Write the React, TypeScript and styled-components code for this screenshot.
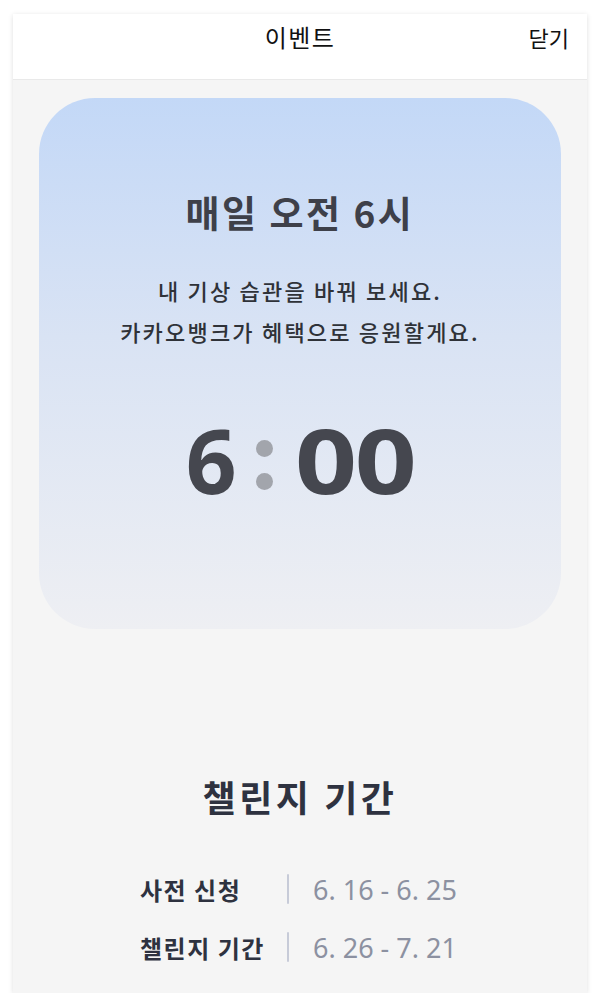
import styled, { createGlobalStyle } from "styled-components";

const GlobalStyle = createGlobalStyle`
  html, body {
    margin: 0;
    padding: 0;
    background: #ffffff;
  }
  body {
    font-family: "Noto Sans CJK KR", "Noto Sans", sans-serif;
  }
`

const Frame = styled.div`
  width: 574px;
  height: 979px;
  margin: 14px 13px 0;
  background: #f5f5f5;
  box-shadow: 0 1px 5px rgba(0, 0, 0, 0.13);
  display: flex;
  flex-direction: column;
  overflow: hidden;
`

const Header = styled.header`
  position: relative;
  height: 66px;
  background: #ffffff;
  border-bottom: 1px solid #e9e9e9;
  display: flex;
  justify-content: center;
  align-items: flex-start;
  padding-top: 6px;
  box-sizing: border-box;
`

const Title = styled.h1`
  margin: 0;
  font-size: 24px;
  font-weight: 400;
  letter-spacing: 1.5px;
  line-height: 34px;
  color: #111111;
`

const CloseButton = styled.button`
  position: absolute;
  right: 18px;
  top: 6px;
  border: 0;
  background: none;
  padding: 0;
  font-family: inherit;
  font-size: 22px;
  line-height: 34px;
  color: #111111;
`

const Card = styled.section`
  margin: 18px 26px 0;
  height: 531px;
  border-radius: 56px;
  background: linear-gradient(180deg, #c3d8f7 0%, #d9e3f4 45%, #eeeff3 100%);
  display: flex;
  flex-direction: column;
  align-items: center;
  padding-top: 92px;
  box-sizing: border-box;
`

const CardTitle = styled.h2`
  margin: 0;
  font-size: 37px;
  font-weight: 700;
  letter-spacing: 2.5px;
  line-height: 44px;
  color: #3e4049;
`

const Desc = styled.p`
  margin: 36px 0 0;
  font-size: 22px;
  font-weight: 500;
  letter-spacing: 2.2px;
  line-height: 41px;
  text-align: center;
  color: #2f3238;
`

const Clock = styled.div`
  margin-top: 58px;
  height: 100px;
  display: flex;
  align-items: center;
  font-family: "Noto Sans", sans-serif;
  font-weight: 700;
  font-size: 89px;
  color: #45474f;
`

const Digits = styled.span<{ $wide?: boolean }>`
  display: inline-block;
  line-height: 100px;
  letter-spacing: ${p => (p.$wide ? "-2px" : "0")};
  transform: ${p => (p.$wide ? "scaleX(1.22)" : "none")};
  transform-origin: left center;
  margin-right: ${p => (p.$wide ? "22px" : "0")};
`

const Colon = styled.span`
  display: flex;
  flex-direction: column;
  gap: 16px;
  margin: 0 22px 0 19px;
  padding-top: 10px;
`

const Dot = styled.span`
  width: 17px;
  height: 17px;
  border-radius: 50%;
  background: #a2a5ac;
`

const Period = styled.section`
  display: flex;
  flex-direction: column;
  align-items: center;
  margin-top: 145px;
`

const PeriodTitle = styled.h2`
  margin: 0;
  font-size: 36px;
  font-weight: 700;
  letter-spacing: 3.5px;
  line-height: 44px;
  color: #2e3240;
`

const Rows = styled.div`
  margin-top: 51px;
  display: flex;
  flex-direction: column;
  gap: 18px;
  align-self: flex-start;
  margin-left: 127px;
`

const Row = styled.div`
  display: flex;
  align-items: center;
  height: 40px;
`

const Label = styled.span`
  width: 147px;
  font-size: 24px;
  font-weight: 700;
  letter-spacing: 1.5px;
  color: #2e3240;
`

const Divider = styled.span`
  width: 2px;
  height: 30px;
  background: #c7cbd8;
  border-radius: 1px;
`

const DateText = styled.span`
  margin-left: 24px;
  font-family: "Noto Sans", sans-serif;
  font-size: 27px;
  color: #8c91a1;
`

const periods = [
  { label: "사전 신청", date: "6. 16 - 6. 25" },
  { label: "챌린지 기간", date: "6. 26 - 7. 21" },
]

export default function App() {
  return (
    <>
      <GlobalStyle />
      <Frame>
        <Header>
          <Title>이벤트</Title>
          <CloseButton>닫기</CloseButton>
        </Header>

        <Card>
          <CardTitle>매일 오전 6시</CardTitle>
          <Desc>
            내 기상 습관을 바꿔 보세요.
            <br />
            카카오뱅크가 혜택으로 응원할게요.
          </Desc>
          <Clock>
            <Digits>6</Digits>
            <Colon>
              <Dot />
              <Dot />
            </Colon>
            <Digits $wide>00</Digits>
          </Clock>
        </Card>

        <Period>
          <PeriodTitle>챌린지 기간</PeriodTitle>
          <Rows>
            {periods.map(p => (
              <Row key={p.label}>
                <Label>{p.label}</Label>
                <Divider />
                <DateText>{p.date}</DateText>
              </Row>
            ))}
          </Rows>
        </Period>
      </Frame>
    </>
  )
}
